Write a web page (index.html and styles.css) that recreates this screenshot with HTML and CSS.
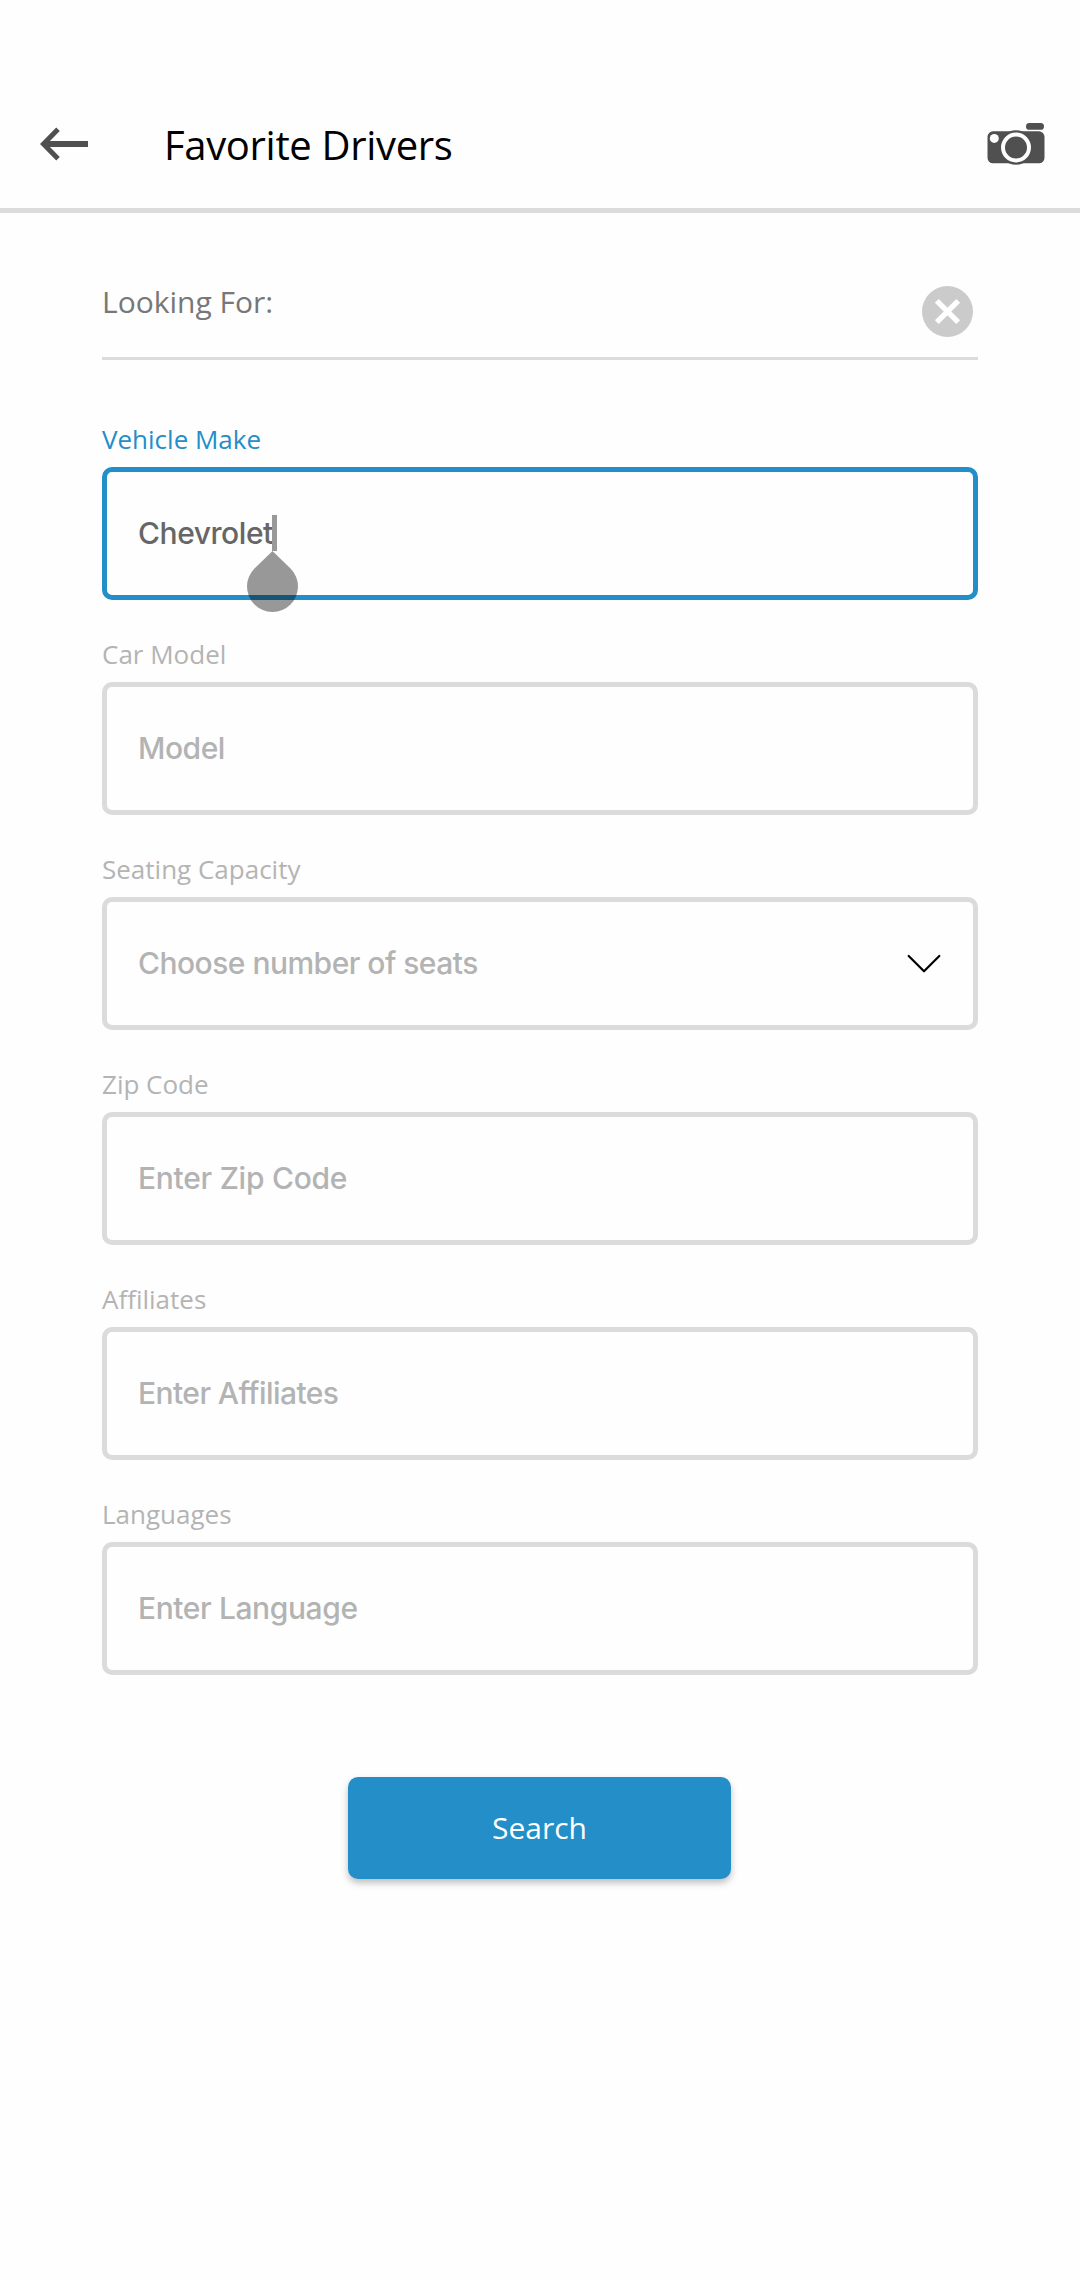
FILE: index.html
```html
<!DOCTYPE html>
<html lang="en">
<head>
<meta charset="utf-8">
<title>Favorite Drivers</title>
<link rel="stylesheet" href="styles.css">
</head>
<body>
<header class="header">
  <svg class="back" width="48" height="34" viewBox="0 0 48 34" fill="none" stroke="#505050" stroke-width="5"><path d="M48 17H4" stroke-width="5.800"/><path d="M18 2.300L3.500 17L18 31.700"/></svg>
  <h1 class="title">Favorite Drivers</h1>
  <svg class="camera" width="58" height="44" viewBox="0 0 58 44"><rect x="39" y="1" width="18" height="6.800" rx="3.400" fill="#505050"/><rect x=".5" y="9.300" width="57" height="32" rx="5.500" fill="#505050"/><circle cx="29" cy="25.500" r="17.200" fill="#505050"/><circle cx="29" cy="25.500" r="13" fill="none" stroke="#fefefe" stroke-width="4"/><circle cx="7.300" cy="16.400" r="4.500" fill="#fefefe"/></svg>
</header>
<main class="content">
  <div class="looking">
    <span class="looking-text">Looking For:</span>
    <svg class="clear" width="51" height="51" viewBox="0 0 51 51"><circle cx="25.500" cy="25.500" r="25.500" fill="#cbcbcb"/><path d="M14.800 14.800L36.200 36.200M36.200 14.800L14.800 36.200" stroke="#fff" stroke-width="5.400"/></svg>
  </div>
  <form class="form">
    <div class="field active">
      <div class="label">Vehicle Make</div>
      <div class="box"><span class="value">Chevrolet</span><span class="caret"><svg class="handle" width="51" height="61" viewBox="0 0 51 61"><path d="M25.500 0L43.530 17.470A25.500 25.500 0 1 1 7.470 17.470Z" fill="#000" fill-opacity=".4"/></svg></span></div>
    </div>
    <div class="field">
      <div class="label">Car Model</div>
      <div class="box"><span class="value">Model</span></div>
    </div>
    <div class="field">
      <div class="label">Seating Capacity</div>
      <div class="box"><span class="value value-seats">Choose number of seats</span><svg class="chevron" width="34" height="20" viewBox="0 0 34 20" fill="none" stroke="#000" stroke-width="2.200" stroke-linecap="round" stroke-linejoin="round"><path d="M1.700 2L17 17.300L32.300 2"/></svg></div>
    </div>
    <div class="field">
      <div class="label">Zip Code</div>
      <div class="box"><span class="value value-zip">Enter Zip Code</span></div>
    </div>
    <div class="field">
      <div class="label">Affiliates</div>
      <div class="box"><span class="value value-affiliates">Enter Affiliates</span></div>
    </div>
    <div class="field">
      <div class="label">Languages</div>
      <div class="box"><span class="value value-languages">Enter Language</span></div>
    </div>
    <button class="search" type="button">Search</button>
  </form>
</main>
</body>
</html>
```
FILE: styles.css
```css
* { box-sizing: border-box; }
body {
  margin: 0;
  min-height: 2280px;
  background: #fefefe;
  font-family: "Open Sans", sans-serif;
}
svg { display: block; flex: none; }
.header {
  display: flex;
  align-items: center;
  height: 213px;
  padding: 80px 35px 0 40px;
  border-bottom: 5px solid #dbdbdb;
}
.title {
  margin: 1px auto 0 76px;
  font-size: 40px;
  font-weight: 400;
  line-height: 54px;
  letter-spacing: -.33px;
  color: #000;
}
.content { padding: 0 102px; }
.looking {
  display: flex;
  justify-content: space-between;
  height: 147px;
  padding: 68px 5px 0 0;
  border-bottom: 3px solid #dbdbdb;
}
.looking-text {
  font-size: 30px;
  line-height: 41px;
  color: #777;
}
.clear { margin-top: 5px; }
.form {
  display: flex;
  flex-direction: column;
  gap: 35px;
  padding-top: 61px;
}
.field {
  display: flex;
  flex-direction: column;
  gap: 9px;
}
.field + .field { padding-top: 1px; }
.label {
  font-size: 26px;
  line-height: 37px;
  color: #b4b4b4;
}
.box {
  display: flex;
  align-items: center;
  height: 133px;
  padding: 0 31px;
  border: 5px solid #dbdbdb;
  border-radius: 10px;
}
.value {
  margin-bottom: 2px;
  font: 500 30px/36px Inter, sans-serif;
  letter-spacing: -.45px;
  color: #b3b3b3;
  white-space: nowrap;
}
.value-seats { letter-spacing: -.52px; }
.value-zip { letter-spacing: -.27px; }
.value-affiliates { letter-spacing: -.57px; }
.value-languages { letter-spacing: -.4px; }
.active .label { color: #238ec7; }
.active .box { border-color: #238ec7; }
.active .value { color: #666; }
.caret {
  position: relative;
  width: 5px;
  height: 36px;
  margin: 0 0 2px -1px;
  background: #999;
}
.handle {
  position: absolute;
  top: 36px;
  left: -25px;
}
.chevron { margin: 0 1px 0 auto; }
.search {
  align-self: center;
  width: 383px;
  height: 102px;
  margin: 67px 1px 0 0;
  padding: 0 0 2px;
  border: 0;
  border-radius: 10px;
  background: #238ec7;
  box-shadow: 0 4px 7px rgba(0, 0, 0, .25);
  color: #fff;
  font: 400 30px/41px "Open Sans", sans-serif;
}
```
